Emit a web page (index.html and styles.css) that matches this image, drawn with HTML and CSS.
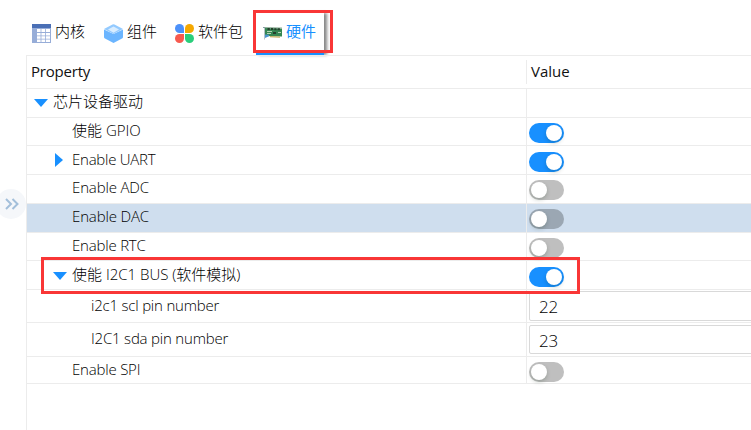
FILE: index.html
```html
<!DOCTYPE html>
<html lang="zh-CN">
<head>
<meta charset="utf-8">
<title>硬件</title>
<link rel="stylesheet" href="styles.css">
</head>
<body>
<div class="app">
  <aside class="rail">
    <button class="expand" aria-label="expand"><svg width="14" height="12" viewBox="0 0 14 12"><path d="M1 1l5 5-5 5M7.500 1l5 5-5 5" fill="none" stroke="#a3bfda" stroke-width="2"/></svg></button>
  </aside>
  <main class="main">
    <nav class="tabs">
      <div class="tab kernel">
        <svg width="19" height="19" viewBox="0 0 19 19"><path fill="#97add8" d="M0 4h19v15H0z"/><path fill="#4a6fb5" d="M0 0h19v4H0z"/><path fill="#fff" d="M5 5h3.600v3H5zM9.400 5h3.800v3H9.400zM14 5h4v3h-4zM5 9h3.600v2.500H5zM9.400 9h3.800v2.500H9.400zM14 9h4v2.500h-4zM5 12.300h3.600v2.400H5zM9.400 12.300h3.800v2.400H9.400zM14 12.300h4v2.400h-4zM5 15.600h3.600V18H5zM9.400 15.600h3.800V18H9.400zM14 15.600h4V18h-4z"/></svg>
        <span>内核</span>
      </div>
      <div class="tab component">
        <svg width="19" height="19" viewBox="0 0 19 19"><path fill="#6bb5ff" d="M0 5.500L9.500 10v9L1 14.600Q0 14 0 13zM19 5.500L9.500 10v9l8.500-4.400q1-.6 1-1.600z"/><path fill="#93caff" d="M0 5L8.500.4q1-.5 2 0L19 5l-9.500 5z"/><path fill="#d9edff" d="M4 5.500l5.500-2.900L15 5.500 9.500 8.800z"/></svg>
        <span>组件</span>
      </div>
      <div class="tab package">
        <svg width="19" height="19" viewBox="0 0 19 19"><path fill="#4c91fa" d="M4.500 0A4.500 4.500 0 0 1 9 4.500V9H4.500a4.500 4.500 0 0 1 0-9z"/><path fill="#f5a800" d="M14.500 0a4.500 4.500 0 0 1 0 9H10V4.500A4.500 4.500 0 0 1 14.500 0z"/><path fill="#f75a4f" d="M4.500 10H9v4.500A4.500 4.500 0 1 1 4.500 10z"/><path fill="#2ace7b" d="M10 10h4.500a4.500 4.500 0 1 1-4.500 4.500z"/></svg>
        <span>软件包</span>
      </div>
      <div class="tab hardware">
        <svg width="19" height="14" viewBox="0 0 19 14"><path fill="#348652" d="M2 2l17 .6v8L2 10z"/><path fill="#8fae98" d="M1 1l18 .5v1L1 2z"/><path fill="#24402c" d="M4.500 2h2.300v2H4.500zM8 2.100h2.200v2H8zM11.300 2.200h2.200v2h-2.200zM14.600 2.300h2.300v2h-2.300zM10 6h3v2h-3z"/><path fill="#b3d2b4" d="M4 5h5v1H4zM4 7h4v1H4zM15 6h3v1h-3z"/><path fill="#c6b060" d="M7 10l10 .4v1.300l-10-.4z"/><path fill="#8399a3" d="M0 1h1.600v12.500H1V2H0z"/><path fill="#4994cc" d="M2 8.500l4 .3v1.500L2 12z"/></svg>
        <span>硬件</span>
      </div>
    </nav>
    <div class="table">
      <div class="row head"><div class="name"><span class="prop">Property</span></div><div class="value"><span class="val">Value</span></div></div>
      <div class="row"><div class="name l0"><i class="down"></i><span>芯片设备驱动</span></div><div class="value"></div></div>
      <div class="row short"><div class="name l1"><span class="gpio">使能 GPIO</span></div><div class="value"><i class="switch on"></i></div></div>
      <div class="row low"><div class="name l1 parent"><i class="right"></i><span class="uart">Enable UART</span></div><div class="value"><i class="switch on"></i></div></div>
      <div class="row"><div class="name l1"><span class="adc">Enable ADC</span></div><div class="value"><i class="switch"></i></div></div>
      <div class="row selected"><div class="name l1"><span class="adc">Enable DAC</span></div><div class="value"><i class="switch"></i></div></div>
      <div class="row short"><div class="name l1"><span class="rtc">Enable RTC</span></div><div class="value"><i class="switch"></i></div></div>
      <div class="row low"><div class="name l1 parent"><i class="down"></i><span>使能 I2C1 BUS (软件模拟)</span></div><div class="value"><i class="switch on"></i></div></div>
      <div class="row field"><div class="name l2"><span class="pin">i2c1 scl pin number</span></div><div class="value"><div class="input">22</div></div></div>
      <div class="row field tall"><div class="name l2"><span class="pin">I2C1 sda pin number</span></div><div class="value"><div class="input">23</div></div></div>
      <div class="row last"><div class="name l1"><span class="rtc">Enable SPI</span></div><div class="value"><i class="switch"></i></div></div>
    </div>
  </main>
  <div class="mark mark-tab"></div>
  <div class="mark mark-bus"></div>
</div>
</body>
</html>
```
FILE: styles.css
```css
* { box-sizing: border-box; }
body { margin: 0; background: #fff; color: #000; font: 300 15px/24px "Open Sans", "Noto Sans CJK SC", sans-serif; overflow: hidden; }
.app { position: relative; display: flex; width: 751px; height: 430px; overflow: hidden; }
.rail { flex: none; width: 26px; padding-top: 189px; overflow: hidden; }
.expand { display: flex; align-items: center; width: 30px; height: 30px; margin-left: -4px; padding: 0 0 0 9px; border: 0; border-radius: 15px; background: #f5f7fa; }
.main { flex: 1; min-width: 0; display: flex; flex-direction: column; }
.tabs { flex: none; display: flex; height: 55px; padding-top: 13px; }
.tab { display: flex; flex: none; align-items: center; height: 42px; padding-bottom: 2px; white-space: nowrap; }
.tab svg { flex: none; }
.tab span { margin-top: -4px; }
.kernel { width: 72px; padding-left: 6px; gap: 4px; }
.component { width: 71px; padding-left: 6px; gap: 4px; }
.package { width: 87px; padding-left: 6px; gap: 4px; }
.hardware { width: 68px; padding-left: 7px; gap: 4px; color: #1890ff; font-weight: 400; border-bottom: 2px solid #1890ff; padding-bottom: 0; box-shadow: 3px 0 3px #888; }
.table { flex: 1; border-top: 1px solid #ececec; border-left: 1px solid #ececec; }
.row { display: flex; height: 29px; border-bottom: 1px solid #ececec; }
.name { display: flex; flex: none; align-items: flex-start; width: 500px; border-right: 1px solid #ececec; white-space: nowrap; line-height: 24px; }
.value { flex: 1; padding: 5px 0 0 2px; }
.short { height: 28px; }
.low .name { padding-top: 1px; }
.low .value { padding-top: 6px; }
.selected { background: #cfdeee; }
.last { height: 27px; }
.head { height: 33px; align-items: center; font-weight: 400; color: #111; }
.head .name { height: 24px; padding-left: 4px; line-height: 22px; }
.head .value { padding: 0 0 2px 4px; }
.l0 { padding-left: 7px; gap: 5px; }
.l1 { padding-left: 45px; }
.l1.parent { padding-left: 26px; }
.l2 { padding-left: 64px; }
.prop { letter-spacing: -.2px; }
.uart { letter-spacing: -.25px; }
.adc { letter-spacing: -.15px; }
.rtc { letter-spacing: -.2px; }
.pin { letter-spacing: -.2px; }
.down { width: 14px; height: 8px; margin-top: 10px; background: #1890ff; clip-path: polygon(0 0, 100% 0, 50% 100%); }
.right { width: 8px; height: 14px; margin: 6px 9px 0 2px; background: #1890ff; clip-path: polygon(0 0, 100% 50%, 0 100%); }
.parent .down { margin-right: 5px; }
.switch { display: block; width: 35px; height: 20px; padding: 2px; border-radius: 10px; background: #bfbfbf; }
.switch::after { content: ""; display: block; width: 16px; height: 16px; border-radius: 50%; background: #fff; box-shadow: 0 2px 4px rgba(0, 35, 11, .2); }
.switch.on { background: #1890ff; }
.switch.on::after { margin-left: 15px; }
.selected .switch { background: #9ba7b3; }
.field { height: 33px; }
.field .name { line-height: 30px; }
.field .value { padding-top: 1px; }
.input { width: 240px; height: 30px; padding-left: 9px; border: 1px solid #d9d9d9; border-radius: 2px; font-size: 17px; letter-spacing: -.3px; line-height: 29px; }
.tall { height: 34px; }
.tall .value { padding-top: 2px; }
.tall .input { height: 29px; }
.mark { position: absolute; border: 3px solid #f93636; }
.mark-tab { left: 253px; top: 10px; width: 80px; height: 43px; }
.mark-bus { left: 41px; top: 257px; width: 539px; height: 37px; }
```
